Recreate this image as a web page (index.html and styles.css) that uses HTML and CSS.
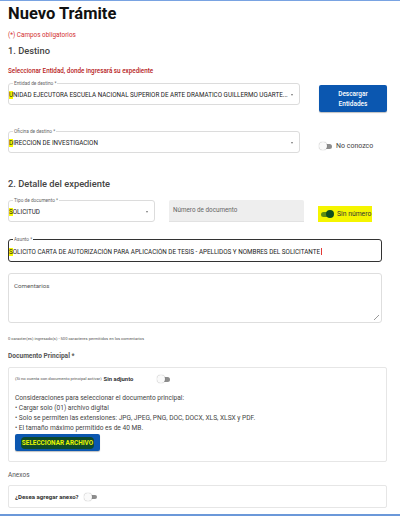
FILE: index.html
```html
<!DOCTYPE html>
<html lang="es">
<head>
  <meta charset="UTF-8">
  <meta name="viewport" content="width=device-width, initial-scale=1.0">
  <title>Nuevo Trámite</title>
  <link rel="stylesheet" href="styles.css">
</head>
<body>
  <div class="page">
    <h1 class="title">Nuevo Trámite</h1>
    <p class="required">(*) Campos obligatorios</p>

    <h2 class="section">1. Destino</h2>
    <p class="hint">Seleccionar Entidad, donde ingresará su expediente</p>

    <div class="row row-entity">
      <div class="field select field-wide">
        <span class="label">Entidad de destino *</span>
        <span class="value"><mark>U</mark>NIDAD EJECUTORA ESCUELA NACIONAL SUPERIOR DE ARTE DRAMATICO GUILLERMO UGARTE...</span>
        <span class="caret"></span>
      </div>
      <button class="btn-download">Descargar<br>Entidades</button>
    </div>

    <div class="row row-office">
      <div class="field select field-wide">
        <span class="label">Oficina de destino *</span>
        <span class="value"><mark>D</mark>IRECCION DE INVESTIGACION</span>
        <span class="caret"></span>
      </div>
      <div class="switch">
        <span class="toggle"></span>
        <span class="switch-text">No conozco</span>
      </div>
    </div>

    <h2 class="section section-2">2. Detalle del expediente</h2>

    <div class="row row-doc">
      <div class="field select field-type">
        <span class="label">Tipo de documento *</span>
        <span class="value"><mark>S</mark>OLICITUD</span>
        <span class="caret"></span>
      </div>
      <div class="field field-number">
        <span class="placeholder">Número de documento</span>
      </div>
      <div class="switch switch-marked">
        <span class="toggle on"></span>
        <span class="switch-text">Sin número</span>
      </div>
    </div>

    <div class="field field-subject">
      <span class="label">Asunto *</span>
      <span class="value"><mark>S</mark>OLICITO CARTA DE AUTORIZACIÓN PARA APLICACIÓN DE TESIS - APELLIDOS Y NOMBRES DEL SOLICITANTE<span class="cursor"></span></span>
    </div>

    <div class="field field-comments">
      <span class="placeholder">Comentarios</span>
      <span class="resize"></span>
    </div>

    <p class="counter">0 caracter(es) ingresado(s) - 500 caracteres permitidos en los comentarios</p>

    <p class="block-title">Documento Principal *</p>
    <div class="box box-main">
      <div class="switch-line">
        <span class="small">(Si no cuenta con documento principal activar)</span>
        <strong>Sin adjunto</strong>
        <span class="toggle"></span>
      </div>
      <ul class="rules">
        <li>Consideraciones para seleccionar el documento principal:</li>
        <li>• Cargar solo (01) archivo digital</li>
        <li>• Solo se permiten las extensiones: JPG, JPEG, PNG, DOC, DOCX, XLS, XLSX y PDF.</li>
        <li>• El tamaño máximo permitido es de 40 MB.</li>
      </ul>
      <button class="btn-file"><span>SELECCIONAR ARCHIVO</span></button>
    </div>

    <p class="block-title plain">Anexos</p>
    <div class="box box-annex">
      <div class="switch-line">
        <strong>¿Desea agregar anexo?</strong>
        <span class="toggle"></span>
      </div>
    </div>
  </div>
  <div class="footer-line"></div>
</body>
</html>
```

FILE: styles.css
```css
body {
  margin: 0;
  font-family: Roboto, "Noto Sans", sans-serif;
  color: #222;
  background: #fff;
  border-top: 1px solid #79a3e2;
}
.page {
  padding: 0 8px;
}
p, h1, h2, ul {
  margin: 0;
  padding: 0;
}
mark {
  background: #f7f700;
  color: inherit;
}

.title {
  font-size: 16.5px;
  font-weight: 700;
  line-height: 26px;
  color: #111;
}
.required {
  margin-top: 3px;
  font-size: 6.4px;
  line-height: 10px;
  color: #d32f2f;
}
.section {
  margin-top: 4px;
  font-size: 9.3px;
  font-weight: 500;
  line-height: 14px;
  color: #444;
}
.section-2 {
  margin-top: 24px;
}
.hint {
  margin-top: 8px;
  font-size: 6.3px;
  font-weight: 500;
  line-height: 10px;
  color: #b71c1c;
}

.row {
  display: flex;
  align-items: flex-start;
}
.row-entity {
  margin-top: 7px;
  gap: 19px;
}
.row-office {
  margin-top: 19px;
  gap: 19px;
}
.row-doc {
  margin-top: 9px;
  gap: 14px;
}

.field {
  position: relative;
  box-sizing: border-box;
  height: 22px;
  border: 1px solid #dcdcdc;
  border-radius: 3px;
  display: flex;
  align-items: center;
  padding: 2px 4px 0 0;
}
.field-wide {
  width: 292px;
}
.field-type {
  width: 147px;
}
.label {
  position: absolute;
  left: 4px;
  top: -3px;
  padding: 0 1px;
  background: #fff;
  font-size: 4.75px;
  line-height: 5px;
  color: #666;
}
.value {
  flex: 1;
  font-size: 6.3px;
  color: #222;
  white-space: nowrap;
  overflow: hidden;
}
.caret {
  width: 0;
  height: 0;
  border-left: 1.6px solid transparent;
  border-right: 1.6px solid transparent;
  border-top: 2px solid #777;
  margin-right: 2px;
}

.field-number {
  width: 135px;
  border: none;
  border-radius: 2px 2px 0 0;
  background: #eeeeee;
  border-bottom: 1px solid #e2e2e2;
  align-items: flex-start;
  padding: 6px 4px 0 4px;
}
.placeholder {
  font-size: 6.3px;
  color: #666;
}

.btn-download {
  margin-top: 2px;
  width: 68px;
  height: 27px;
  border: none;
  border-radius: 2px;
  background: #0b57b0;
  color: #fff;
  font-family: inherit;
  font-size: 6.5px;
  font-weight: 500;
  line-height: 10px;
  padding: 0;
  box-shadow: 0 1px 1px rgba(0, 0, 0, 0.25);
}

.switch {
  display: flex;
  align-items: center;
  gap: 4px;
  margin-top: 11px;
}
.switch-text {
  font-size: 7px;
  color: #444;
}
.switch-marked {
  margin-top: 6px;
  height: 16px;
  padding: 0 1px 0 1px;
  background: #f5f500;
  gap: 3px;
}
.switch-marked .switch-text {
  font-size: 6.8px;
  color: #333;
}

.toggle {
  position: relative;
  display: inline-block;
  width: 13px;
  height: 8px;
  vertical-align: middle;
}
.toggle::before {
  content: "";
  position: absolute;
  left: 2px;
  top: 2px;
  width: 11px;
  height: 4.5px;
  border-radius: 3px;
  background: #8d8d8d;
}
.toggle::after {
  content: "";
  position: absolute;
  left: 0;
  top: 0;
  box-sizing: border-box;
  width: 8px;
  height: 8px;
  border-radius: 50%;
  background: #fafafa;
  box-shadow: 0 0 1px rgba(0, 0, 0, 0.45);
}
.toggle.on {
  width: 15px;
}
.toggle.on::before {
  width: 12px;
  background: #5d8c12;
}
.toggle.on::after {
  left: 7px;
  background: #0f4f1e;
  box-shadow: none;
}

.field-subject {
  margin-top: 17px;
  width: 374px;
  height: 23px;
  border-color: #333;
}
.cursor {
  display: inline-block;
  width: 0.6px;
  height: 7px;
  margin-left: 0.5px;
  vertical-align: -1.5px;
  background: #e53935;
}

.field-comments {
  margin-top: 11px;
  width: 374px;
  height: 50px;
  align-items: flex-start;
  padding: 8px 5px;
  border-color: #dedede;
}
.field-comments .placeholder {
  font-size: 6.2px;
  color: #555;
}
.resize {
  position: absolute;
  right: 2px;
  bottom: 2px;
  width: 5px;
  height: 5px;
  background: linear-gradient(135deg, transparent 45%, #999 45%, #999 52%, transparent 52%, transparent 70%, #999 70%, #999 77%, transparent 77%);
}

.counter {
  margin-top: 12px;
  font-size: 4.1px;
  line-height: 8px;
  color: #555;
}
.block-title {
  margin-top: 8px;
  font-size: 6.6px;
  font-weight: 700;
  line-height: 10px;
  color: #555;
}
.block-title.plain {
  font-weight: 400;
  font-size: 6.5px;
}

.box {
  box-sizing: border-box;
  width: 379px;
  border: 1px solid #e6e6e6;
  border-radius: 2px;
  padding: 0 6px;
}
.box-main {
  margin-top: 6px;
  height: 95px;
  padding-top: 6px;
}
.box-annex {
  margin-top: 5px;
  height: 23px;
  display: flex;
  align-items: center;
}
.switch-line {
  display: flex;
  align-items: center;
  gap: 2px;
  line-height: 10px;
}
.switch-line .small {
  font-size: 4.2px;
  color: #555;
}
.switch-line strong {
  font-size: 6.1px;
  font-weight: 700;
  color: #333;
}
.box-main .switch-line strong {
  font-size: 5.9px;
}
.box-main .switch-line .toggle {
  margin-left: 22px;
}
.box-annex .switch-line .toggle {
  margin-left: 3px;
}

.rules {
  list-style: none;
  margin-top: 9px;
  font-size: 6.6px;
  line-height: 10px;
  color: #444;
}
.btn-file {
  margin-top: 1px;
  width: 85px;
  height: 17px;
  border: none;
  border-radius: 2px;
  background: #0b57b0;
  padding: 0 3px;
  display: flex;
  align-items: center;
  justify-content: center;
  box-shadow: 0 1px 1px rgba(0, 0, 0, 0.25);
}
.btn-file span {
  font-family: Roboto, sans-serif;
  font-size: 6.4px;
  font-weight: 700;
  color: #e9f700;
  background: #0e4a2c;
  border-radius: 4px;
  padding: 2px 1px;
}

.footer-line {
  margin-top: 6px;
  height: 2px;
  background: #6b98d9;
}
```
